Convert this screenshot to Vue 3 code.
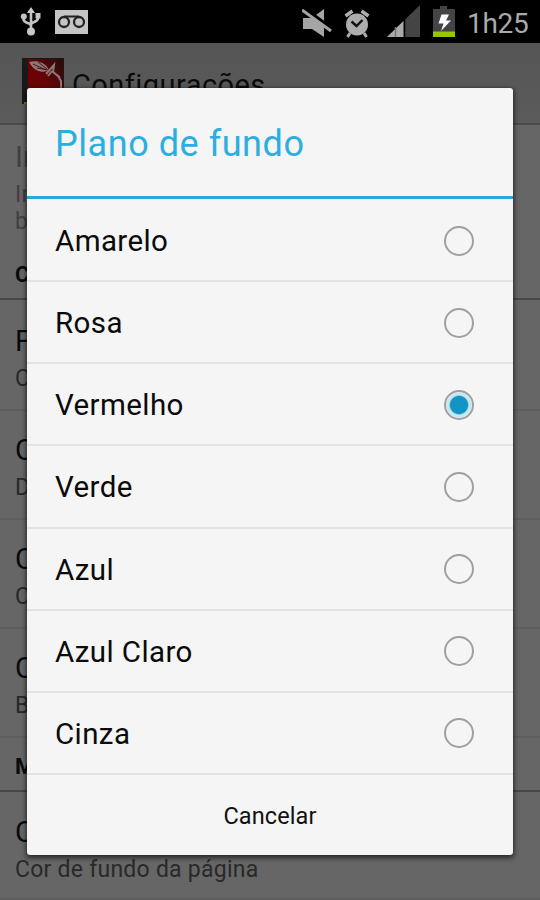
<script setup>
import { ref } from 'vue'

const options = ['Amarelo', 'Rosa', 'Vermelho', 'Verde', 'Azul', 'Azul Claro', 'Cinza']
const selected = ref('Vermelho')
const preferences = [
  { title: 'F', summary: 'C' },
  { title: 'C', summary: 'D' },
  { title: 'C', summary: 'C' },
  { title: 'C', summary: 'B' },
]
</script>

<template>
  <div class="screen">
    <header class="status">
      <svg class="usb" width="22" height="30" viewBox="0 0 22 30">
        <path d="M11 6V25M3.500 10v3c0 5 7.500 3 7.500 7M18 10v2c0 5-7 3-7 7" fill="none" stroke="#c4c4c4" stroke-width="2.600" />
        <path d="M11 1l4 6H7z" fill="#c8c8c8" />
        <circle cx="3.800" cy="10.500" r="3" fill="#c4c4c4" />
        <circle cx="11" cy="25.500" r="4" fill="#c8c8c8" />
        <path d="M15.500 7h5v5.500h-5z" fill="#c4c4c4" />
      </svg>
      <svg class="voicemail" width="33" height="24" viewBox="0 0 33 24">
        <rect width="33" height="24" fill="#c4c4c4" />
        <path d="M9 6.500h15" stroke="#222" stroke-width="2" />
        <circle cx="9" cy="12" r="5" fill="none" stroke="#222" stroke-width="2.300" />
        <circle cx="24" cy="12" r="5" fill="none" stroke="#222" stroke-width="2.300" />
      </svg>
      <span class="spacer"></span>
      <svg class="mute" width="30" height="28" viewBox="0 0 30 28">
        <path d="M1 9h9L22 0v28L10 20H1z" fill="#a5a5a5" />
        <path d="M0-2L30 20" stroke="#000" stroke-width="4" />
        <path d="M0 1l29 21" stroke="#a5a5a5" stroke-width="3" />
      </svg>
      <svg class="alarm" width="26" height="29" viewBox="0 0 26 29">
        <path d="M6 24l-2.500 4M20 24l2.500 4" stroke="#adadad" stroke-width="3" />
        <path d="M1.500 7l7-5M17.500 2l7 5" stroke="#adadad" stroke-width="3.500" />
        <circle cx="13" cy="15.500" r="11" fill="#adadad" />
        <path d="M7.500 12.500l5 4.500 6-6" fill="none" stroke="#111" stroke-width="2.400" />
      </svg>
      <svg class="signal" width="33" height="33" viewBox="0 0 33 33">
        <path d="M0 32L33 0v32z" fill="#444" />
        <path d="M0 32L16.500 16v16z" fill="#aaa" />
        <path d="M8.500 22v10" stroke="#777" stroke-width="1.500" />
        <path d="M17.500 13v19" stroke="#000" stroke-width="1.500" />
      </svg>
      <svg class="battery" width="22" height="31" viewBox="0 0 22 31">
        <path d="M0 3h7V0h7v3h8v23H0z" fill="#444" />
        <path d="M0 25.500h22V31H0z" fill="#99c400" />
        <path d="M8.500 8.500H16l-3 6h5L8 25l2.500-7.500H5.500z" fill="#fff" />
      </svg>
      <span class="clock">1h25</span>
    </header>

    <div class="actionbar">
      <svg class="logo" width="42" height="46" viewBox="0 0 42 46">
        <defs>
          <linearGradient id="red" x1="0" y1="1" x2="1" y2="0">
            <stop offset="0" stop-color="#760000" />
            <stop offset=".5" stop-color="#670306" />
            <stop offset="1" stop-color="#270a0b" />
          </linearGradient>
        </defs>
        <rect width="42" height="46" fill="#191919" />
        <rect x="6" y="1" width="35" height="45" fill="url(#red)" />
        <path d="M7 4c8-2 16 0 20 8-8 4-15 1-20-8z" fill="#8c7777" />
        <path d="M11 6l13 6M16 4l9 7M15 10l12 2" stroke="#531317" stroke-width="1" />
        <path d="M24 16l8-9-1 7 5 4 3 5v7M30 13l-4 5M35 18l3 1" fill="none" stroke="#8c7777" stroke-width="2" />
        <path d="M2 44h4v2H2z" fill="#777800" />
      </svg>
      <span class="heading">Configurações</span>
    </div>

    <main class="prefs">
      <div class="intro">
        <div class="title">In</div>
        <div class="summary">In</div>
        <div class="summary">b</div>
      </div>
      <h2 class="category first">C</h2>
      <div v-for="(item, i) in preferences" :key="i" class="pref">
        <div class="title">{{ item.title }}</div>
        <div class="summary">{{ item.summary }}</div>
      </div>
      <h2 class="category second">M</h2>
      <div class="pref">
        <div class="title">C</div>
        <div class="summary">Cor de fundo da página</div>
      </div>
    </main>

    <section class="dialog" role="dialog">
      <h1 class="dialog-title"><span>Plano de fundo</span></h1>
      <div class="options">
        <div v-for="option in options" :key="option" class="option" @click="selected = option">
          <span class="label">{{ option }}</span>
          <span class="radio" :class="{ checked: option === selected }"></span>
        </div>
      </div>
      <button class="cancel"><span>Cancelar</span></button>
    </section>
  </div>
</template>

<style>
body { margin: 0; }
</style>

<style scoped>
.screen {
  position: relative;
  width: 540px;
  height: 900px;
  overflow: hidden;
  background: #666;
  font-family: Roboto, "Liberation Sans", sans-serif;
  color: #0b0b0b;
}
.status {
  display: flex;
  height: 43px;
  box-sizing: border-box;
  padding-left: 20px;
  background: #000;
}
.usb { margin-top: 6px; }
.voicemail { margin: 10px 0 0 13px; }
.spacer { flex: 1; }
.mute { margin: 9px 12px 0 0; }
.alarm { margin: 9px 17px 0 0; }
.signal { margin: 5px 13px 0 0; }
.battery { margin: 6px 12px 0 0; }
.clock {
  width: 73px;
  font-size: 28px;
  line-height: 47px;
  color: #aaa;
  letter-spacing: -.3px;
  white-space: nowrap;
}
.actionbar {
  display: flex;
  height: 82px;
  box-sizing: border-box;
  padding: 15px 0 0 22px;
  background: linear-gradient(#555, #5b5b5b);
  border-bottom: 2px solid #4a4a4a;
}
.heading {
  margin-left: 8px;
  font-size: 29px;
  line-height: 54px;
  letter-spacing: .45px;
}
.title {
  padding-left: 15px;
  font-size: 29px;
  line-height: 38px;
  height: 42px;
}
.summary {
  padding-left: 15px;
  font-size: 23px;
  line-height: 29px;
  height: 27px;
  color: #292929;
  letter-spacing: .25px;
}
.intro { height: 130px; box-sizing: border-box; padding-top: 13px; }
.intro .title { color: #404040; }
.intro .summary { color: #404040; }
.category {
  margin: 0;
  box-sizing: border-box;
  padding-left: 15px;
  font-size: 22px;
  font-weight: 700;
  line-height: 40px;
  border-bottom: 2px solid #484848;
}
.first { height: 45px; margin-bottom: 2px; }
.second { height: 54px; padding-top: 9px; }
.pref {
  height: 109px;
  box-sizing: border-box;
  padding-top: 20px;
  border-bottom: 2px solid #5e5e5e;
}
.pref:last-child { height: 108px; padding-top: 21px; }
.dialog {
  position: absolute;
  left: 27px;
  top: 88px;
  width: 486px;
  height: 767px;
  display: flex;
  flex-direction: column;
  border-radius: 3px;
  background: #f5f5f5;
  box-shadow: 0 2px 5px 1px #0009, 0 0 1px #333;
  overflow: hidden;
}
.dialog-title {
  margin: 0;
  height: 111px;
  box-sizing: border-box;
  padding: 1px 0 0 28px;
  border-bottom: 3px solid #27aadb;
  color: #2caee0;
  font-size: 36px;
  font-weight: 400;
  line-height: 110px;
  letter-spacing: .55px;
}
.options {
  flex: none;
  display: flex;
  flex-direction: column;
  height: 576px;
  box-sizing: border-box;
  padding-top: 1px;
}
.option {
  flex: 1;
  display: flex;
  align-items: center;
  justify-content: space-between;
  padding: 1px 39px 0 28px;
  border-bottom: 2px solid #e3e3e3;
  font-size: 29.500px;
  letter-spacing: .4px;
}
.label { padding-top: 1px; }
.radio {
  width: 30px;
  height: 30px;
  box-sizing: border-box;
  border: 2px solid #a0a0a0;
  border-radius: 50%;
}
.checked { background: radial-gradient(circle, #1295c4 0 8.500px, #c7e7f1 10px 12px, #eef5f7 13px); }
.cancel {
  flex: 1;
  border: 0;
  padding: 2px 0 0;
  background: transparent;
  color: #111;
  font: 23.500px Roboto, "Liberation Sans", sans-serif;
  letter-spacing: .1px;
}
</style>
